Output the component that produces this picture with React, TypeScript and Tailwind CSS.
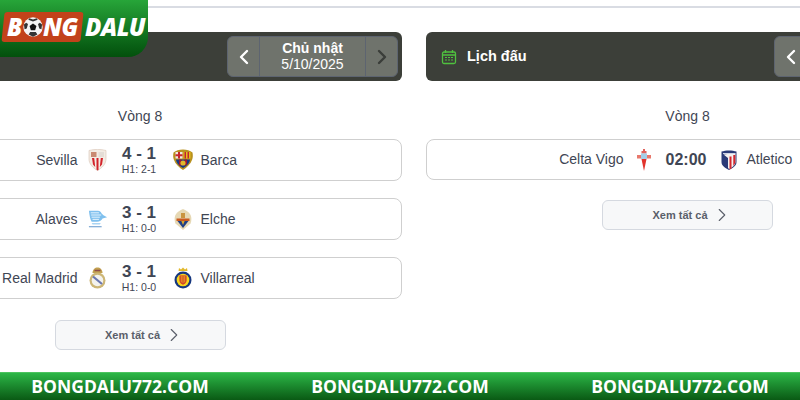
import type { ReactNode } from 'react'
import { ChevronLeft, ChevronRight } from 'lucide-react'

const sans = "font-['Liberation_Sans',Arial,sans-serif]"

function Ball({ size = 26 }: { size?: number }) {
  return (
    <svg width={size} height={size} viewBox="0 0 32 32" className="shrink-0">
      <circle cx="16" cy="16" r="15.5" fill="#f4f4f4" />
      <path d="M16 10.500l5.500 4-2.100 6.500h-6.800l-2.100-6.500z" fill="#111" />
      <path d="M10 2l6 2 6-2 1.500 2.500L16 7 8.500 4.500zM1.500 12l3.500-3 3 2-2 7.500-3.500 1zM30.500 12L27 9l-3 2 2 7.500 3.500 1zM9 28l2.500-4h9l2.500 4-7 3.500z" fill="#333" />
    </svg>
  )
}

function Logo() {
  return (
    <div className="absolute left-0 top-0 flex h-[57px] w-[148px] items-start rounded-br-[20px] bg-gradient-to-b from-[#27a539] to-[#03500c] pl-[3px] pt-[12px] font-['Open_Sans',sans-serif] italic">
      <div className="flex h-[30px] w-[79px] -skew-x-6 items-center justify-center rounded-[3px] bg-[#c2421a] text-[24px] font-extrabold leading-none text-white">
        <span className="skew-x-6">B</span>
        <span className="ml-[1px] skew-x-6"><Ball size={20} /></span>
        <span className="skew-x-6 tracking-[-0.5px]">NG</span>
      </div>
      <span className="ml-[3px] mt-[1px] text-[24px] font-extrabold leading-[28px] tracking-[-0.5px] text-white">DALU</span>
    </div>
  )
}

function Sevilla() {
  return (
    <svg width="19" height="22" viewBox="0 0 19 22">
      <path d="M1 1.500c5-1.500 12-1.500 17 0V10c0 5-4 9-8.500 11.500C5 19 1 15 1 10z" fill="#f3ece4" stroke="#d9c3b4" strokeWidth=".6" />
      <path d="M3 3h5.500v5H3z" fill="#c98a72" />
      <path d="M10.500 3H16v5h-5.500z" fill="#e4ddd6" />
      <path d="M4 9h2.200l1 9L5 15.500zM8.500 9h2v12l-1 .500-1-1zM12.800 9H15l-1 6.500-2.200 2.500z" fill="#d3232a" />
    </svg>
  )
}

function Barca() {
  return (
    <svg width="20" height="22" viewBox="0 0 20 22">
      <path d="M.5 3.500C3 1.500 6 .5 10 .5s7 1 9.500 3c.5 3 .5 5-.5 7.500-1.500 4-5 7.500-9 10-4-2.500-7.500-6-9-10-1-2.500-1-4.500-.5-7.500z" fill="#b8911f" />
      <path d="M2.500 3h7v6.500h-7z" fill="#efe9e2" />
      <path d="M5 3h2v6.500H5zM2.500 5.300h7v2h-7z" fill="#c9252d" />
      <path d="M10.500 3h7v6.500h-7z" fill="#e6bc1c" />
      <path d="M11.500 3h1.500v6.500h-1.500zM14.500 3H16v6.500h-1.500z" fill="#bf2430" />
      <path d="M3 10.500h14c-.5 4-3.500 6.500-7 8.500-3.500-2-6.500-4.500-7-8.500z" fill="#163a86" />
      <path d="M6 10.500h2.500v6H6zM11.500 10.500H14v5l-2.500 1.500z" fill="#a3162e" />
      <circle cx="10" cy="14" r="2.600" fill="#e1b82b" />
    </svg>
  )
}

function Alaves() {
  return (
    <svg width="22" height="20" viewBox="0 0 22 20">
      <path d="M1 1h10c2 0 3 1 4 3l2 2 4 2-5 1.500c-1 2-3 3.500-6 3.500H4C2.500 11 1.500 6 1 1z" fill="#7fc0ee" />
      <path d="M3 3.200h9M3.500 5.600h11M4 8h9M5 10.400h7" stroke="#eef8ff" strokeWidth="1" />
      <path d="M4 14.500h10l-1 1.500H5z" fill="#a9d4f3" />
      <path d="M1 18.500h14" stroke="#6e9fd0" strokeWidth="1.200" />
    </svg>
  )
}

function Elche() {
  return (
    <svg width="18" height="21" viewBox="0 0 18 21">
      <path d="M9 0c3 1 5.500 3 7 5 2 3 1.500 7 .5 9.500L9 21 1.500 14.500C.500 12 0 8 2 5c1.500-2 4-4 7-5z" fill="#e6d8b4" />
      <path d="M7 4h4v5H7z" fill="#c9943f" />
      <path d="M2.500 9.500h13v2.500h-13z" fill="#cb5a1f" />
      <path d="M3.500 12h11L9 19z" fill="#1f3f86" />
      <path d="M7.300 12h3.400L9 16z" fill="#d9a52c" />
    </svg>
  )
}

function Madrid() {
  return (
    <svg width="17" height="22" viewBox="0 0 17 22">
      <path d="M3.500 6c0-3.500 2.500-5.500 5-5.500s5 2 5 5.500z" fill="#c2a04f" />
      <path d="M5.500 3.500h6" stroke="#8e4a4a" strokeWidth="1.500" />
      <circle cx="8.500" cy="13.500" r="8" fill="#cdb676" />
      <circle cx="8.500" cy="13.500" r="5.800" fill="#f3f2ee" />
      <path d="M4 9.500l9 7.500" stroke="#6a76b0" strokeWidth="2.200" />
    </svg>
  )
}

function Villarreal() {
  return (
    <svg width="18" height="22" viewBox="0 0 18 22">
      <path d="M4.500 4L5 1l2 1.500L9 .5l2 2L13 1l.5 3z" fill="#e2b92c" />
      <circle cx="9" cy="13" r="8.500" fill="#16377f" />
      <circle cx="9" cy="13" r="6.300" fill="#f7d51d" />
      <path d="M5.500 8.500h7v5c0 2-2 3.700-3.500 4.200-1.500-.5-3.500-2.200-3.500-4.200z" fill="#c9252d" />
      <path d="M7.200 9v6.500M9 9v7.500M10.800 9v6.500" stroke="#f7d51d" strokeWidth=".8" />
    </svg>
  )
}

function Celta() {
  return (
    <svg width="16" height="22" viewBox="0 0 16 22">
      <path d="M7 0h2v2h1.500v2.500h-5V2H7z" fill="#e0635c" />
      <path d="M5 4.500h6V10H5z" fill="#a3cfe8" />
      <path d="M1 6h4v3.500H1zM11 6h4v3.500h-4z" fill="#e8786c" />
      <path d="M5.500 10h5L8 22z" fill="#e2332c" />
    </svg>
  )
}

function Atletico() {
  return (
    <svg width="16" height="20" viewBox="0 0 16 20">
      <path d="M.5 1.500c4-1.500 11-1.500 15 0V12c0 4-4 6-7.500 8-3.500-2-7.500-4-7.500-8z" fill="#2a3a78" />
      <path d="M2.500 4.500l12-1.500v9c0 3-3 5-6 7-.5-.3-1.500-.8-1.500-.8V8z" fill="#f4f1f1" />
      <path d="M8.500 6.500h2v12l-2 1zM12.300 5h2v8l-2 3z" fill="#d4272e" />
      <path d="M2 3.500h12" stroke="#cfd3e6" strokeWidth="1" />
    </svg>
  )
}

function MatchRow({
  home,
  away,
  homeCrest,
  awayCrest,
  score,
  half,
}: {
  home: string
  away: string
  homeCrest: ReactNode
  awayCrest: ReactNode
  score: string
  half?: string
}) {
  return (
    <div className={`grid grid-cols-[1fr_65px_1fr] items-center rounded-lg border border-[#cfcfcf] bg-white text-[14px] text-[#3f4654] ${half ? 'h-[42px]' : 'h-[41px] pr-[3px]'}`}>
      <div className="flex items-center justify-end gap-[10px]">
        <span>{home}</span>
        <span className="flex w-[20px] justify-center">{homeCrest}</span>
      </div>
      {half ? (
        <div className="flex flex-col items-center pb-[2px] pr-[2px]">
          <span className="text-[17px] font-bold leading-[19px]">{score}</span>
          <span className="text-[10.5px] leading-[12px]">{half}</span>
        </div>
      ) : (
        <div className="text-center text-[16px] font-bold">{score}</div>
      )}
      <div className="flex items-center gap-[8px]">
        <span className="flex w-[20px] justify-center">{awayCrest}</span>
        <span>{away}</span>
      </div>
    </div>
  )
}

function SeeAll() {
  return (
    <button className="flex h-[30px] w-[171px] items-center justify-center gap-[3px] rounded-md border border-[#d5d9e0] bg-[#f7f8f9] pl-[10px] text-[11px] font-bold text-[#5a5f6a]">
      Xem tất cả
      <ChevronRight size={22} strokeWidth={1.2} />
    </button>
  )
}

function DateNav() {
  return (
    <div className="flex h-[41px] w-[171px] shrink-0 rounded-md border border-[#5d6470] bg-[#6f736c]">
      <div className="flex w-[32px] items-center justify-center border-r border-[#5d6470] text-white">
        <ChevronLeft size={24} strokeWidth={2.4} />
      </div>
      <div className="flex flex-1 flex-col items-center justify-center pb-[1px] text-white">
        <span className="text-[14px] font-bold leading-[16px]">Chủ nhật</span>
        <span className="text-[14px] leading-[16px]">5/10/2025</span>
      </div>
      <div className="flex w-[32px] items-center justify-center border-l border-[#5d6470] text-[#3a3d39]">
        <ChevronRight size={24} strokeWidth={2.4} />
      </div>
    </div>
  )
}

function CalendarIcon() {
  return (
    <svg width="16" height="16" viewBox="0 0 16 16" fill="none" stroke="#4fc13f" strokeWidth="1.300">
      <rect x="1.500" y="3" width="13" height="11.500" rx="1.500" />
      <path d="M4.500 1v3M11.500 1v3M1.500 6h13" />
      <path d="M4 8.500h2M7 8.500h2M10 8.500h2M4 11h2M7 11h2M10 11h2" strokeWidth="1.200" />
    </svg>
  )
}

export default function App() {
  return (
    <div className={`relative flex h-[400px] w-[800px] flex-col overflow-hidden bg-white ${sans}`}>
      <div className="h-[8px] border-b-2 border-[#d9dce3]" />

      <div className="ml-[-122px] flex flex-1 gap-[24px] pt-[24px]">
        <section className="flex w-[524px] shrink-0 flex-col">
          <div className="flex h-[49px] items-center justify-end rounded-md bg-[#3c3f39] pr-[4px]">
            <DateNav />
          </div>
          <p className="mt-[25px] text-center text-[14px] leading-[20px] text-[#3f4654]">Vòng 8</p>
          <div className="mt-[13px] flex flex-col gap-[17px]">
            <MatchRow home="Sevilla" away="Barca" homeCrest={<Sevilla />} awayCrest={<Barca />} score="4 - 1" half="H1: 2-1" />
            <MatchRow home="Alaves" away="Elche" homeCrest={<Alaves />} awayCrest={<Elche />} score="3 - 1" half="H1: 0-0" />
            <MatchRow home="Real Madrid" away="Villarreal" homeCrest={<Madrid />} awayCrest={<Villarreal />} score="3 - 1" half="H1: 0-0" />
          </div>
          <div className="mt-[21px] flex justify-center">
            <SeeAll />
          </div>
        </section>

        <section className="flex w-[523px] shrink-0 flex-col">
          <div className="flex h-[49px] items-center justify-between rounded-md bg-[#3c3f39] pl-[15px] pr-[4px]">
            <div className="flex items-center gap-[10px] pt-[1px] text-[14.5px] font-bold text-white">
              <CalendarIcon />
              Lịch đấu
            </div>
            <DateNav />
          </div>
          <p className="mt-[25px] text-center text-[14px] leading-[20px] text-[#3f4654]">Vòng 8</p>
          <div className="mt-[13px]">
            <MatchRow home="Celta Vigo" away="Atletico" homeCrest={<Celta />} awayCrest={<Atletico />} score="02:00" />
          </div>
          <div className="mt-[20px] flex justify-center">
            <SeeAll />
          </div>
        </section>
      </div>

      <div className="flex h-[28px] shrink-0 justify-center border-t border-[#4cc35f] bg-gradient-to-b from-[#2cb747] to-[#0a5a14]">
        {[0, 1, 2].map((i) => (
          <span
            key={i}
            className="flex w-[280px] shrink-0 items-center justify-center font-['Open_Sans',sans-serif] text-[17.5px] font-bold text-white"
          >
            BONGDALU772.COM
          </span>
        ))}
      </div>

      <Logo />
    </div>
  )
}
